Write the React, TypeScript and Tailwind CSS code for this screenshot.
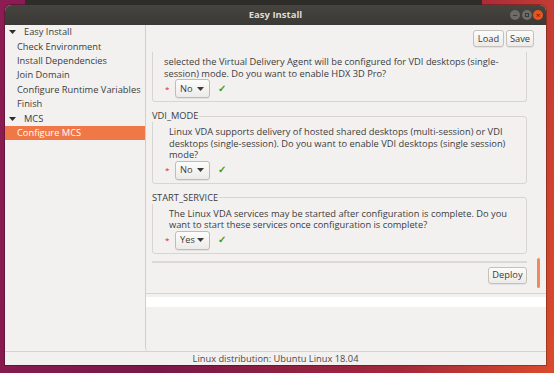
import type { ReactNode } from "react";

const tree = [
  { label: "Easy Install", parent: true },
  { label: "Check Environment" },
  { label: "Install Dependencies" },
  { label: "Join Domain" },
  { label: "Configure Runtime Variables" },
  { label: "Finish" },
  { label: "MCS", parent: true },
  { label: "Configure MCS", selected: true },
];

function Caret({ color = "#3c3c3c" }: { color?: string }) {
  return (
    <svg width="7" height="4" viewBox="0 0 7 4">
      <path d="M0 0h7L3.5 4z" fill={color} />
    </svg>
  );
}

function Btn({ children, className = "" }: { children: ReactNode; className?: string }) {
  return (
    <div
      className={
        "flex h-[17px] items-center justify-center rounded-[3px] border border-[#c5c0b9] bg-[linear-gradient(#fcfcfb,#edebe9)] shadow-[0_1px_0_rgba(0,0,0,0.06)] " +
        className
      }
    >
      {children}
    </div>
  );
}

function Answer({ value }: { value: string }) {
  return (
    <div className="flex items-center">
      <span className="w-[10px] text-[8px] leading-none text-[#e01b24]">*</span>
      <div className="flex h-[19px] w-[35px] items-center rounded-[3px] border border-[#c0bbb4] bg-[linear-gradient(#fcfcfb,#edebe9)] pl-[4px] shadow-[0_1px_0_rgba(0,0,0,0.06)]">
        <span>{value}</span>
        <span className="ml-auto mr-[5px] flex">
          <Caret />
        </span>
      </div>
      <span className="ml-[8px] text-[9.5px] font-bold leading-none text-[#4e9a06]">✓</span>
    </div>
  );
}

function Frame({ label, lines, value }: { label: string; lines: string[]; value: string }) {
  return (
    <fieldset className="rounded-[3px] border border-[#d8d5d0] pb-[3px] pl-[12px]">
      <legend className="-ml-[13px] pr-[1px] leading-[12px]">{label}</legend>
      <div className="mt-[4px] whitespace-nowrap pl-[4px] leading-[11.5px]">
        {lines.map((l) => (
          <div key={l}>{l}</div>
        ))}
      </div>
      <Answer value={value} />
    </fieldset>
  );
}

export default function App() {
  return (
    <div className="h-[373px] w-[554px] overflow-hidden bg-[linear-gradient(100deg,#8c1c52_0%,#7a1748_35%,#a3283c_75%,#db4b2a_100%)] font-['Open_Sans',sans-serif] text-[9.3px] text-[#3c3c3c]">
      <div className="flex h-[5px]">
        <div className="w-[25px]" />
        <div className="w-[457px] bg-[#2e2d2a]" />
      </div>
      <div className="ml-[5px] flex h-[360px] w-[541px] flex-col overflow-hidden rounded-t-[6px] bg-[#f2f1f0] shadow-[0_0_0_1px_rgba(0,0,0,0.25)]">
        {/* title bar */}
        <div className="relative flex h-[20px] items-center justify-center bg-[linear-gradient(#46443f,#3a3935)]">
          <span className="text-[9.5px] font-bold text-[#dfdbd2]">Easy Install</span>
          <div className="absolute right-[3px] top-[5px] flex gap-[1.5px]">
            <div className="flex h-[10px] w-[10px] items-center justify-center rounded-full bg-[#6e6c67]">
              <div className="h-[1px] w-[4px] bg-[#3c3b37]" />
            </div>
            <div className="flex h-[10px] w-[10px] items-center justify-center rounded-full bg-[#6e6c67]">
              <div className="h-[4px] w-[4px] border border-[#3c3b37]" />
            </div>
            <div className="flex h-[10px] w-[10px] items-center justify-center rounded-full bg-[#e95420] text-[8px] leading-none text-[#3c1a0c]">
              ×
            </div>
          </div>
        </div>

        {/* body */}
        <div className="flex h-[327px] border-b border-[#d6d3ce]">
          <div className="w-[140px]">
            {tree.map((t) => (
              <div
                key={t.label}
                className={
                  "flex h-[14.4px] items-center whitespace-nowrap " +
                  (t.selected ? "bg-[#f07746] pl-[12px] text-white" : t.parent ? "pl-[4px]" : "pl-[12px]")
                }
              >
                {t.parent && (
                  <span className="mr-[8px] flex">
                    <Caret color="#2c2c2c" />
                  </span>
                )}
                {t.label}
              </div>
            ))}
          </div>

          <div className="flex flex-1 flex-col rounded-bl-[4px] border-l border-[#d2cfca]">
            <div className="flex h-[27px] items-start justify-end gap-[2px] pr-[12px] pt-[5px]">
              <Btn className="w-[31px]">Load</Btn>
              <Btn className="w-[28px]">Save</Btn>
            </div>

            <div className="relative h-[241px] overflow-hidden">
              <div className="flex w-[381px] flex-col pl-[6px]">
                <div className="rounded-b-[3px] border border-t-0 border-[#d8d5d0] pb-[3px] pl-[12px] pt-[4px]">
                  <div className="-ml-[1px] whitespace-nowrap leading-[11.5px]">
                    <div>selected the Virtual Delivery Agent will be configured for VDI desktops (single-</div>
                    <div>session) mode. Do you want to enable HDX 3D Pro?</div>
                  </div>
                  <Answer value="No" />
                </div>
                <div className="h-[8px]" />
                <Frame
                  label="VDI_MODE"
                  lines={[
                    "Linux VDA supports delivery of hosted shared desktops (multi-session) or VDI",
                    "desktops (single-session). Do you want to enable VDI desktops (single session)",
                    "mode?",
                  ]}
                  value="No"
                />
                <div className="h-[8px]" />
                <Frame
                  label="START_SERVICE"
                  lines={[
                    "The Linux VDA services may be started after configuration is complete. Do you",
                    "want to start these services once configuration is complete?",
                  ]}
                  value="Yes"
                />
                <div className="mt-[7px] h-[2px] bg-[#dcd9d4]" />
                <div className="mt-[4px] flex justify-end">
                  <Btn className="w-[39px]">Deploy</Btn>
                </div>
              </div>
              <div className="absolute right-[6px] top-[206px] h-[30px] w-[3px] rounded-full bg-[#f08a5d]" />
            </div>

            <div className="border-t border-[#d6d3ce] pt-[3px]">
              <div className="h-[10px] bg-white" />
            </div>
          </div>
        </div>

        {/* status */}
        <div className="flex flex-1 items-center justify-center pt-[1px] leading-none text-[#4a4a4a]">
          Linux distribution: Ubuntu Linux 18.04
        </div>
      </div>
    </div>
  );
}
